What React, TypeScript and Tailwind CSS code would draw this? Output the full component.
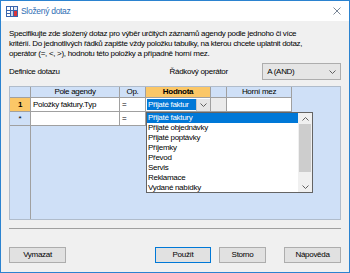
import React from 'react';

const listItems = [
  'Přijaté faktury',
  'Přijaté objednávky',
  'Přijaté poptávky',
  'Příjemky',
  'Převod',
  'Servis',
  'Reklamace',
  'Vydané nabídky',
];

const Chevron = ({ up = false }: { up?: boolean }) => (
  <svg width="7" height="4" viewBox="0 0 7 4">
    <path
      d={up ? 'M0.5 3.5 L3.5 0.5 L6.5 3.5' : 'M0.5 0.5 L3.5 3.5 L6.5 0.5'}
      fill="none"
      stroke="#606060"
      strokeWidth="1"
    />
  </svg>
);

const AppIcon = () => (
  <svg width="12" height="11" viewBox="0 0 12 11">
    <rect x="0" y="0" width="12" height="11" fill="#3a66ad" />
    <rect x="1" y="1" width="3" height="3" fill="#ffffff" />
    <rect x="5" y="1" width="2" height="3" fill="#ffffff" />
    <rect x="8" y="1" width="3" height="3" fill="#e2e9f5" />
    <rect x="1" y="5" width="3" height="2" fill="#ffffff" />
    <rect x="1" y="8" width="3" height="2" fill="#ffffff" />
    <rect x="5" y="5" width="2" height="5" fill="#c9d6ec" />
    <rect x="8" y="5" width="3" height="5" fill="#d8353b" />
  </svg>
);

export default function App() {
  const cell = 'border-r border-b border-[#a0a0a0] h-full flex items-center';

  return (
    <div className="w-[350px] h-[273px] border border-[#2b83d0] bg-[#f0f0f0] flex flex-col font-['Liberation_Sans',Arial,sans-serif] text-[8px] tracking-[-0.3px] text-black overflow-hidden">
      {/* Title bar */}
      <div className="h-[20px] bg-white flex items-center pl-[5px] pr-[8px] shrink-0">
        <AppIcon />
        <span className="ml-[3px] text-[8.5px] text-[#2e6db4]">Složený dotaz</span>
        <svg width="8" height="8" viewBox="0 0 8 8" className="ml-auto">
          <path d="M0.5 0.5 L7.5 7.5 M7.5 0.5 L0.5 7.5" stroke="#7a8797" strokeWidth="1" />
        </svg>
      </div>

      <div className="px-[8px] flex flex-col">
        <p className="mt-[8px] leading-[10px] whitespace-nowrap">
          Specifikujte zde složený dotaz pro výběr určitých záznamů agendy podle jednoho či více
          <br />
          kritérií. Do jednotlivých řádků zapište vždy položku tabulky, na kterou chcete uplatnit dotaz,
          <br />
          operátor (=, &lt;, &gt;), hodnotu této položky a případně horní mez.
        </p>

        {/* Definition row */}
        <div className="mt-[4px] h-[17px] flex items-center">
          <span className="w-[161px]">Definice dotazu</span>
          <span className="w-[93px]">Řádkový operátor</span>
          <div className="w-[79px] h-full bg-[#e5e5e5] border border-[#adadad] flex items-center pl-[4px] pr-[4px]">
            <span>A (AND)</span>
            <span className="ml-auto flex">
              <Chevron />
            </span>
          </div>
        </div>

        {/* Grid */}
        <div className="relative mt-[6px] h-[134px] bg-[#cfe0f7] border border-[#b0bccb] flex flex-col">
          {/* Header */}
          <div className="h-[11px] flex shrink-0">
            <div className={`${cell} w-[21px]`} />
            <div className={`${cell} w-[89px] justify-center`}>Pole agendy</div>
            <div className={`${cell} w-[26px] justify-center`}>Op.</div>
            <div className={`${cell} w-[65px] justify-center bg-[#fbc767] font-bold`}>Hodnota</div>
            <div className={`${cell} w-[16px]`} />
            <div className={`${cell} w-[65px] justify-center`}>Horní mez</div>
          </div>

          {/* Row 1 */}
          <div className="h-[14px] flex shrink-0">
            <div className={`${cell} w-[21px] justify-center bg-[#fbc767] font-bold`}>1</div>
            <div className={`${cell} w-[89px] bg-white pl-[2px]`}>Položky faktury.Typ</div>
            <div className={`${cell} w-[26px] bg-white pl-[2px]`}>=</div>
            <div className={`${cell} w-[65px] bg-white pl-[1px]`}>
              <span className="h-[11px] w-[49px] bg-[#0078d7] text-white flex items-center pl-[1px] whitespace-nowrap overflow-hidden">
                Přijaté faktur
              </span>
              <span className="h-[12px] w-[14px] ml-auto bg-[#e6e6e6] border-l border-[#c8c8c8] flex items-center justify-center">
                <Chevron />
              </span>
            </div>
            <div className={`${cell} w-[16px] bg-[#ebebeb]`} />
            <div className={`${cell} w-[65px] bg-white`} />
          </div>

          {/* Row 2 */}
          <div className="h-[14px] flex shrink-0">
            <div className={`${cell} w-[21px] justify-center`}>*</div>
            <div className={`${cell} w-[89px] bg-white`} />
            <div className={`${cell} w-[26px] bg-white pl-[2px]`}>=</div>
            <div className={`${cell} w-[65px] bg-white`} />
            <div className={`${cell} w-[16px] bg-white`} />
            <div className={`${cell} w-[65px] bg-white`} />
          </div>

          {/* Empty area */}
          <div className="flex-1 flex">
            <div className="w-[21px] h-full border-r border-[#a0a0a0]" />
          </div>

          {/* Dropdown list */}
          <div className="absolute left-[136px] top-[25px] w-[167px] h-[81px] bg-white border border-[#646464] flex">
            <div className="flex-1 flex flex-col">
              {listItems.map((item, i) => (
                <div
                  key={item}
                  className={`h-[10px] leading-[10px] pl-[1px] whitespace-nowrap ${
                    i === 0 ? 'bg-[#0078d7] text-white' : ''
                  }`}
                >
                  {item}
                </div>
              ))}
            </div>
            <div className="w-[14px] bg-[#f0f0f0] flex flex-col">
              <div className="h-[11px] flex items-center justify-center">
                <Chevron up />
              </div>
              <div className="mx-[1px] h-[48px] bg-[#cdcdcd]" />
              <div className="flex-1" />
              <div className="h-[11px] flex items-center justify-center">
                <Chevron />
              </div>
            </div>
          </div>
        </div>

        {/* Separator */}
        <div className="mt-[8px] h-px bg-[#a0a0a0]" />

        {/* Buttons */}
        <div className="mt-[18px] h-[16px] flex">
          <button className="w-[57px] h-full bg-[#e1e1e1] border border-[#adadad] tracking-[-0.3px]">Vymazat</button>
          <button className="ml-[89px] w-[56px] h-full bg-[#e1e1e1] border border-[#0078d7] tracking-[-0.3px]">Použít</button>
          <button className="ml-[8px] w-[47px] h-full bg-[#e1e1e1] border border-[#adadad] tracking-[-0.3px]">Storno</button>
          <button className="ml-[18px] w-[57px] h-full bg-[#e1e1e1] border border-[#adadad] tracking-[-0.3px]">Nápověda</button>
        </div>
      </div>
    </div>
  );
}
